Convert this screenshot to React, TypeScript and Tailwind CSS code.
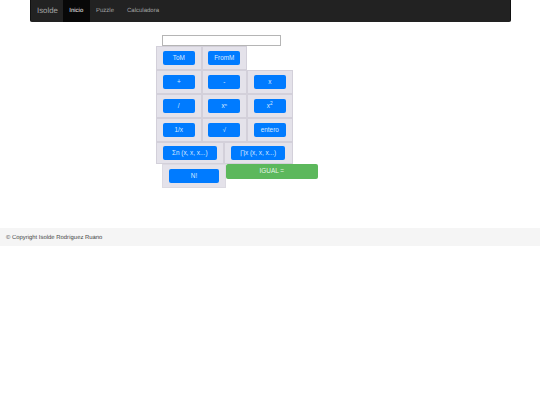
import type { ReactNode } from "react";

const ROWS: ReactNode[][] = [
  ["ToM", "FromM"],
  ["+", "-", "x"],
  ["/", "xⁿ", <>x<sup>2</sup></>],
  ["1/x", "√", "entero"],
];

function CalcButton({ label, className }: { label: ReactNode; className: string }) {
  return (
    <button className={"flex h-[14.5px] items-center justify-center rounded-[2px] bg-[#007bff] text-[6.4px] leading-none text-[#d9e9ff] " + className}>
      {label}
    </button>
  );
}

export default function App() {
  return (
    <div className="min-h-[405px] bg-white font-['Liberation_Sans',Arial,sans-serif] antialiased [text-rendering:geometricPrecision]">
      <nav className="mx-[29.5px] flex h-[22px] items-stretch rounded-b-[2px] border-x border-[#111] bg-[#222]">
        <span className="flex w-[32.5px] items-center pl-[6.5px] text-[7.8px] text-[#a5a5a5]">Isolde</span>
        <a className="flex w-[26.5px] items-center justify-center bg-[#080808] text-[6px] text-[#eee]">Inicio</a>
        <a className="flex items-center px-[6.5px] text-[6px] text-[#a5a5a5]">Puzzle</a>
        <a className="flex items-center pl-[6.5px] text-[6px] text-[#a5a5a5]">Calculadora</a>
      </nav>

      <main className="h-[206px] pl-[156px] pt-[12.5px]">
        <input className="ml-[6px] block h-[11.5px] w-[119px] border border-[#b5b5b5] bg-white" />
        {ROWS.map((row, i) => (
          <div key={i} className="flex">
            {row.map((label, j) => (
              <div key={j} className="flex h-[24px] w-[45.5px] items-center justify-center border-[0.5px] border-[#d3d0da] bg-[#e4e2ea]">
                <CalcButton label={label} className="w-[32px]" />
              </div>
            ))}
          </div>
        ))}
        <div className="flex">
          <div className="flex h-[22px] w-[67.5px] items-center justify-center border-[0.5px] border-[#d3d0da] bg-[#e4e2ea]">
            <CalcButton label="Σn (x, x, x...)" className="w-[54px]" />
          </div>
          <div className="flex h-[22px] w-[69px] items-center justify-center border-[0.5px] border-[#d3d0da] bg-[#e4e2ea]">
            <CalcButton label="∏x (x, x, x...)" className="w-[54.5px]" />
          </div>
        </div>
        <div className="ml-[6px] flex items-start">
          <div className="flex h-[24px] w-[64px] items-center justify-center border-[0.5px] border-[#dcdae2] bg-[#e4e2ea]">
            <CalcButton label="N!" className="w-[50px]" />
          </div>
          <button className="flex h-[14.5px] w-[91.5px] items-center justify-center rounded-[2px] bg-[#5cb85c] text-[6.4px] leading-none text-[#e6f4e6]">IGUAL =</button>
        </div>
      </main>

      <footer className="flex h-[18px] items-center bg-[#f5f5f5] pl-[6px] pt-[2px] text-[5.9px] text-[#444]">
        © Copyright Isolde Rodríguez Ruano
      </footer>
    </div>
  );
}
